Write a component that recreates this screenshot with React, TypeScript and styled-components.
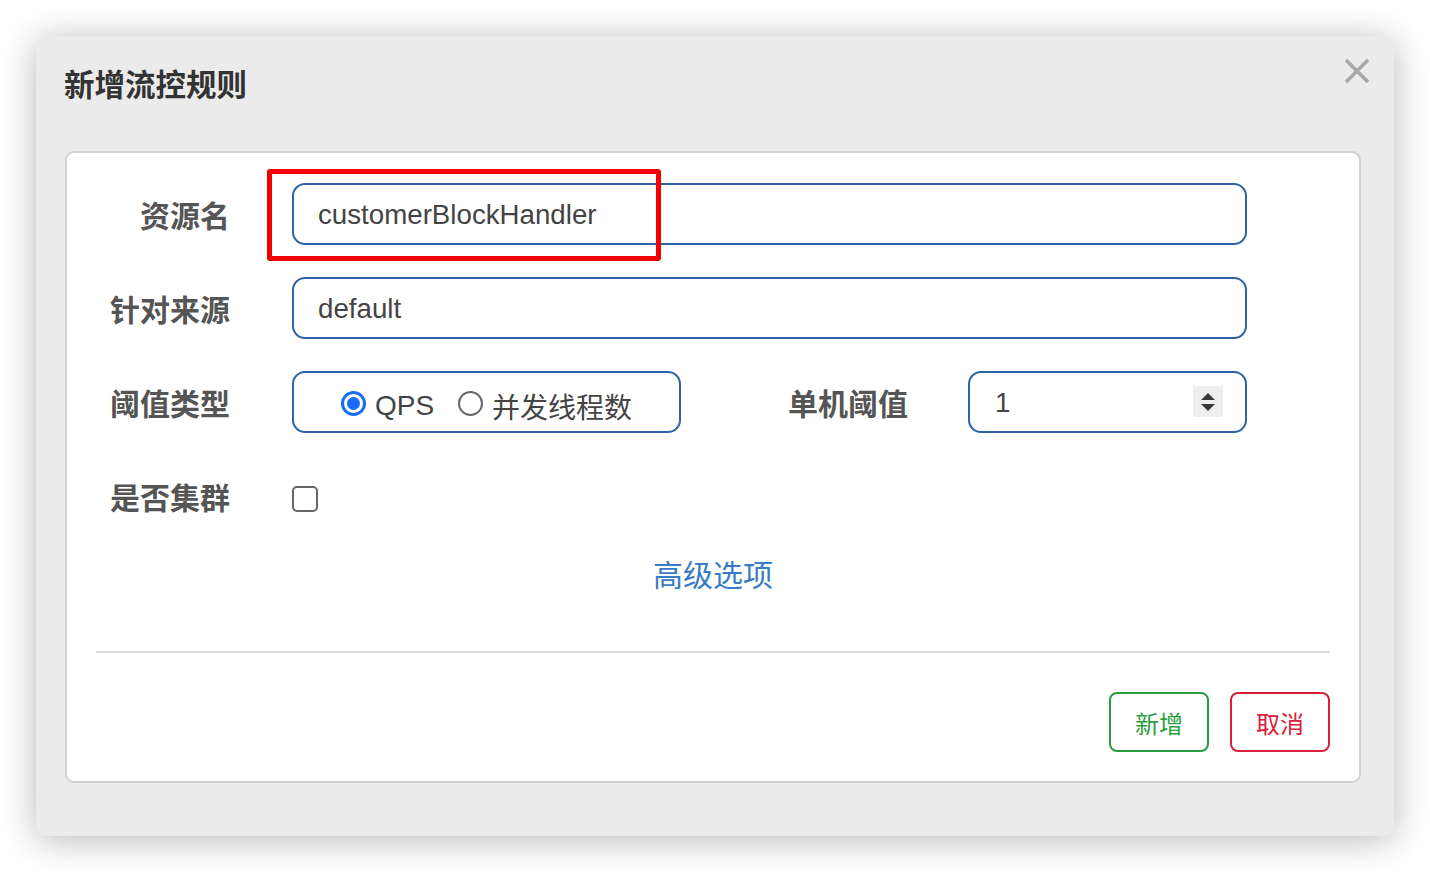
import React from "react";
import styled, { createGlobalStyle } from "styled-components";

const GlobalStyle = createGlobalStyle`
  html, body { margin: 0; padding: 0; background: #ffffff; }
  body { font-family: "Liberation Sans", "Noto Sans CJK SC", sans-serif; }
  * { box-sizing: border-box; }
`;

const Page = styled.div`
  width: 1430px;
  height: 872px;
  padding: 36px;
`;

const Dialog = styled.div`
  width: 1358px;
  height: 800px;
  background: #ebebeb;
  border-radius: 10px;
  box-shadow: 0 4px 36px rgba(0, 0, 0, 0.28);
  padding: 0 33px 0 29px;
  display: flex;
  flex-direction: column;
`;

const Header = styled.div`
  height: 115px;
  display: flex;
  align-items: flex-start;
  justify-content: space-between;
  position: relative;
`;

const Title = styled.h4`
  margin: 29px 0 0 -1px;
  font-family: "Noto Sans CJK SC", sans-serif;
  font-size: 30.5px;
  font-weight: 700;
  color: #333;
  line-height: 36px;
`;

const Close = styled.button`
  position: absolute;
  right: -9px;
  top: 22px;
  width: 26px;
  height: 26px;
  padding: 0;
  border: 0;
  background: transparent;
  display: flex;
`;

const Panel = styled.div`
  background: #fff;
  border: 2px solid #d2d2d2;
  border-radius: 9px;
  padding: 30px 29px 29px 29px;
  height: 632px;
  display: flex;
  flex-direction: column;
`;

const FormRow = styled.div`
  display: flex;
  align-items: center;
  height: 62px;
  margin-bottom: 32px;
`;

const Label = styled.label<{ $w?: number; $mr?: number }>`
  width: ${(p) => p.$w ?? 134}px;
  margin-right: ${(p) => p.$mr ?? 62}px;
  text-align: right;
  font-family: "Noto Sans CJK SC", sans-serif;
  font-size: 30px;
  font-weight: 700;
  color: #555;
  line-height: 36px;
  flex-shrink: 0;
`;

const Field = styled.div<{ $w: number }>`
  position: relative;
  width: ${(p) => p.$w}px;
  height: 62px;
  flex-shrink: 0;
`;

const TextBox = styled.div<{ $pl?: number }>`
  width: 100%;
  height: 100%;
  border: 2px solid #2c64a8;
  border-radius: 13px;
  padding-left: ${(p) => p.$pl ?? 24}px;
  padding-top: 1px;
  display: flex;
  align-items: center;
  font-family: "Liberation Sans", "Noto Sans CJK SC", sans-serif;
  font-size: 27.7px;
  color: #444;
`;

const Highlight = styled.div`
  position: absolute;
  left: -25px;
  top: -14px;
  width: 394px;
  height: 92px;
  border: 5px solid #f40000;
  border-radius: 3px;
  pointer-events: none;
`;

const RadioGroup = styled.div`
  width: 100%;
  height: 100%;
  border: 2px solid #2c64a8;
  border-radius: 13px;
  display: flex;
  align-items: center;
  justify-content: center;
  gap: 24px;
  padding-top: 8px;
`;

const RadioOption = styled.span`
  display: flex;
  align-items: center;
  gap: 9px;
  font-family: "Liberation Sans", "Noto Sans CJK SC", sans-serif;
  font-size: 28px;
  color: #444;
`;

const RadioCircle = styled.span<{ $checked?: boolean }>`
  width: 25px;
  height: 25px;
  border-radius: 50%;
  border: ${(p) => (p.$checked ? "3px solid #1a6cf4" : "2px solid #666")};
  display: flex;
  align-items: center;
  justify-content: center;
  margin-top: -5px;
  &::after {
    content: "";
    display: ${(p) => (p.$checked ? "block" : "none")};
    width: 13px;
    height: 13px;
    border-radius: 50%;
    background: #1a6cf4;
  }
`;

const Spinner = styled.span`
  position: absolute;
  right: 24px;
  top: 15px;
  width: 30px;
  height: 31px;
  background: #eeeeee;
  border-radius: 2px;
  display: flex;
  align-items: center;
  justify-content: center;
`;

const Checkbox = styled.span`
  width: 26px;
  height: 26px;
  margin-top: 5px;
  border: 2px solid #666;
  border-radius: 5px;
  display: block;
`;

const AdvancedLink = styled.a`
  align-self: center;
  margin-top: -8px;
  font-family: "Noto Sans CJK SC", sans-serif;
  font-size: 30px;
  line-height: 44px;
  color: #3a7bc6;
  text-decoration: none;
`;

const Divider = styled.hr`
  margin: 56px 0 0 0;
  border: 0;
  border-top: 2px solid #dedede;
`;

const Footer = styled.div`
  display: flex;
  justify-content: flex-end;
  gap: 21px;
  margin-top: 39px;
`;

const Button = styled.button<{ $color: string }>`
  width: 100px;
  height: 60px;
  border: 2px solid ${(p) => p.$color};
  color: ${(p) => p.$color};
  background: #fff;
  border-radius: 8px;
  font-family: "Noto Sans CJK SC", sans-serif;
  font-size: 24px;
  padding: 0;
`;

export default function App() {
  return (
    <>
      <GlobalStyle />
      <Page>
        <Dialog>
          <Header>
            <Title>新增流控规则</Title>
            <Close aria-label="close">
              <svg width="26" height="26" viewBox="0 0 26 26">
                <path d="M2 2 L24 24 M24 2 L2 24" stroke="#a8a8a8" strokeWidth="3.6" />
              </svg>
            </Close>
          </Header>
          <Panel>
            <FormRow>
              <Label>资源名</Label>
              <Field $w={955}>
                <TextBox>customerBlockHandler</TextBox>
                <Highlight />
              </Field>
            </FormRow>
            <FormRow>
              <Label>针对来源</Label>
              <Field $w={955}>
                <TextBox>default</TextBox>
              </Field>
            </FormRow>
            <FormRow>
              <Label>阈值类型</Label>
              <Field $w={389}>
                <RadioGroup>
                  <RadioOption>
                    <RadioCircle $checked />
                    QPS
                  </RadioOption>
                  <RadioOption>
                    <RadioCircle />
                    并发线程数
                  </RadioOption>
                </RadioGroup>
              </Field>
              <Label $w={227} $mr={60}>单机阈值</Label>
              <Field $w={279}>
                <TextBox $pl={25}>1</TextBox>
                <Spinner>
                  <svg width="16" height="24" viewBox="0 0 16 24">
                    <path d="M1 10 L8 3 L15 10 Z" fill="#3a3a3a" />
                    <path d="M1 14 L8 21 L15 14 Z" fill="#3a3a3a" />
                  </svg>
                </Spinner>
              </Field>
            </FormRow>
            <FormRow>
              <Label>是否集群</Label>
              <Checkbox />
            </FormRow>
            <AdvancedLink href="#">高级选项</AdvancedLink>
            <Divider />
            <Footer>
              <Button $color="#2a9e3c">新增</Button>
              <Button $color="#d8203a">取消</Button>
            </Footer>
          </Panel>
        </Dialog>
      </Page>
    </>
  );
}
